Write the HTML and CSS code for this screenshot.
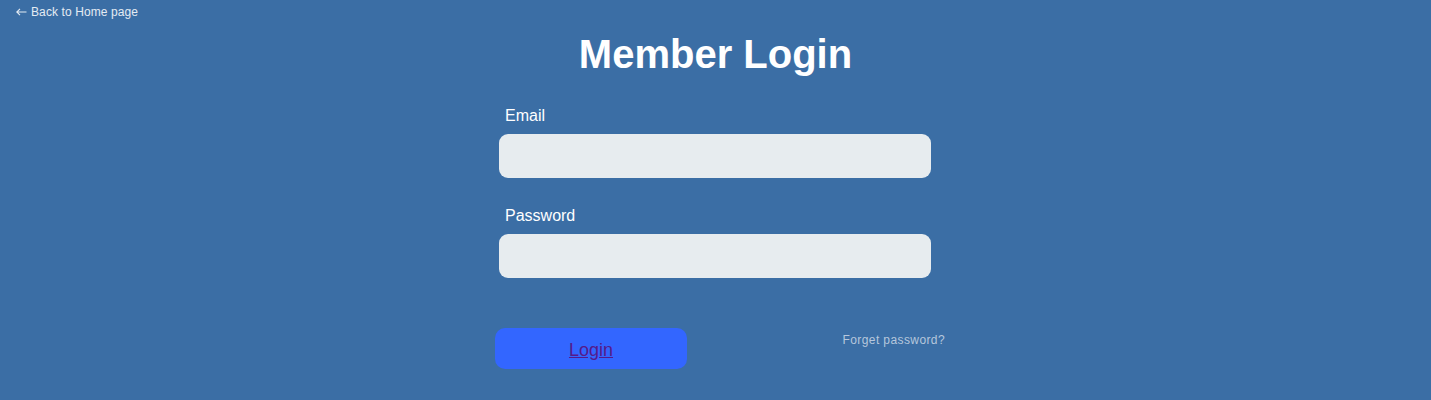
FILE: index.html
```html
<!DOCTYPE html>
<html lang="en">
<head>
<meta charset="utf-8">
<title>Member Login</title>
<link rel="stylesheet" href="styles.css">
</head>
<body>
<a class="back-link" href="#home"><svg class="back-arrow" width="11" height="8" viewBox="0 0 11 8" aria-hidden="true"><path d="M4 0.8 L0.8 4 L4 7.2 M0.8 4 H10.5" fill="none" stroke="currentColor" stroke-width="1.1"/></svg>Back to Home page</a>
<h1 class="page-title">Member Login</h1>
<form class="login-form" onsubmit="return false">
  <div class="field">
    <label class="field-label" for="email">Email</label>
    <input class="field-input" id="email" type="email">
  </div>
  <div class="field field-second">
    <label class="field-label" for="password">Password</label>
    <input class="field-input" id="password" type="password">
  </div>
  <div class="actions">
    <div class="login-btn"><a class="login-link" href="">Login</a></div>
    <a class="forgot-link" href="#forgot">Forget password?</a>
  </div>
</form>
</body>
</html>
```

FILE: styles.css
```css
html, body {
  margin: 0;
  padding: 0;
}
body {
  background: #3b6ea5;
  font-family: "Liberation Sans", Arial, Helvetica, sans-serif;
  color: #ffffff;
  min-height: 400px;
}
.back-link {
  display: flex;
  align-items: center;
  gap: 4px;
  padding: 5px 16px 0;
  font-size: 12px;
  line-height: 14px;
  color: #e4ebf3;
  text-decoration: none;
  letter-spacing: 0.1px;
}
.back-arrow {
  display: block;
  margin-top: -1px;
}
.page-title {
  margin: 12px 0 0;
  text-align: center;
  font-size: 40px;
  line-height: 46px;
  font-weight: bold;
  color: #ffffff;
}
.login-form {
  width: 433px;
  margin: 0 auto;
}
.field {
  display: flex;
  flex-direction: column;
  margin-top: 30px;
}
.field-second {
  margin-top: 29px;
}
.field-label {
  padding-left: 6px;
  font-size: 16px;
  line-height: 18px;
  color: #ffffff;
  margin-bottom: 9px;
}
.field-input {
  box-sizing: border-box;
  width: 432px;
  height: 44px;
  border: none;
  border-radius: 9px;
  background: #e7ecef;
  padding: 0 12px;
  font-size: 16px;
  outline: none;
}
.actions {
  display: flex;
  justify-content: space-between;
  align-items: flex-start;
  margin: 50px -14px 0 -4px;
  width: 450px;
}
.login-btn {
  width: 192px;
  height: 41px;
  border-radius: 10px;
  background: #3366ff;
  display: flex;
  align-items: center;
  justify-content: center;
}
.login-link {
  font-size: 18px;
  line-height: 20px;
  color: #551a8b;
  text-decoration: underline;
  margin-top: 2px;
}
.forgot-link {
  margin-top: 5px;
  font-size: 12px;
  line-height: 14px;
  color: #b6c7dc;
  text-decoration: none;
  letter-spacing: 0.4px;
}
```
